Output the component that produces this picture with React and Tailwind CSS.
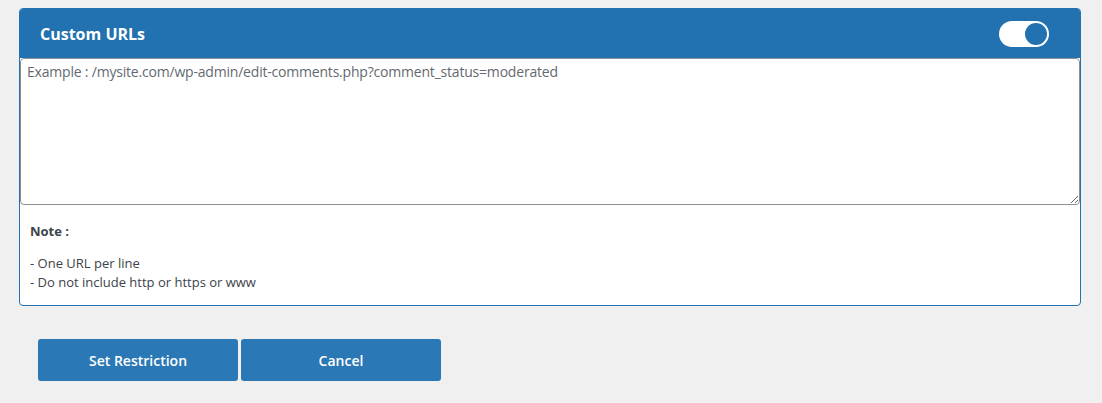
import React, { useState } from 'react';

function Toggle({ on, onChange }) {
  return (
    <button
      onClick={() => onChange(!on)}
      className="relative w-[50px] h-[26px] rounded-full bg-white"
      aria-pressed={on}
    >
      <span
        className={`absolute top-[2px] w-[22px] h-[22px] rounded-full bg-[#2271b1] ${on ? 'right-[2px]' : 'left-[2px]'}`}
      />
    </button>
  );
}

function App() {
  const [enabled, setEnabled] = useState(true);
  const [urls, setUrls] = useState('');

  return (
    <div className="min-h-screen bg-[#f0f0f1] pt-2 pl-[19px] pr-[21px] font-['Open_Sans',sans-serif]">
      <div className="border border-[#2271b1] rounded-[4px] bg-white overflow-hidden">
        <div className="h-[49px] bg-[#2271b1] flex items-center justify-between pl-5 pr-[31px]">
          <h2 className="text-white font-bold text-[16px]">Custom URLs</h2>
          <Toggle on={enabled} onChange={setEnabled} />
        </div>

        <textarea
          value={urls}
          onChange={(e) => setUrls(e.target.value)}
          placeholder="Example : /mysite.com/wp-admin/edit-comments.php?comment_status=moderated"
          className="block w-full h-[147px] border border-[#8c8f94] rounded-[4px] px-[6px] py-[2px] text-[14px] tracking-[-0.2px] text-[#2c3338] placeholder:text-[#646970] outline-none"
        />

        <div className="px-[10px] pt-[17px] pb-[13px] text-[13px] text-[#3c434a]">
          <p className="font-bold leading-[18px] mb-[14px]">Note :</p>
          <p className="leading-[19px]">- One URL per line</p>
          <p className="leading-[19px]">- Do not include http or https or www</p>
        </div>
      </div>

      <div className="flex gap-[3px] pl-[19px] mt-[33px]">
        <button className="w-[200px] h-[42px] rounded-[3px] bg-[#2a78b5] text-white font-semibold text-[14px]">
          Set Restriction
        </button>
        <button className="w-[200px] h-[42px] rounded-[3px] bg-[#2a78b5] text-white font-semibold text-[14px]">
          Cancel
        </button>
      </div>
    </div>
  );
}

export default App;
